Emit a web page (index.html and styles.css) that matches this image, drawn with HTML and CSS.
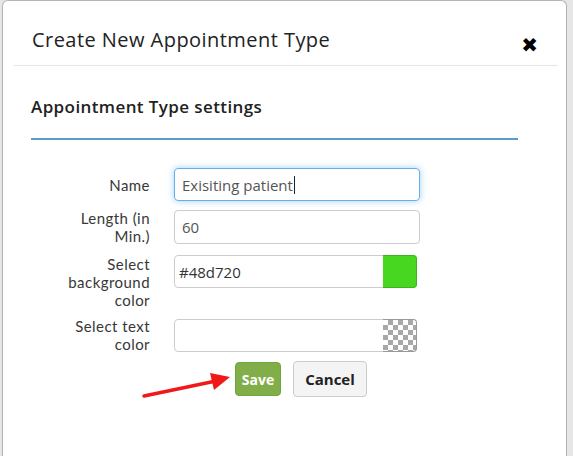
FILE: index.html
```html
<!DOCTYPE html>
<html lang="en">
<head>
<meta charset="utf-8">
<title>Create New Appointment Type</title>
<link rel="stylesheet" href="styles.css">
</head>
<body>
<div class="modal">
  <div class="modal-header">
    <h1 class="modal-title">Create New Appointment Type</h1>
    <span class="close">&#10006;</span>
  </div>
  <div class="modal-body">
    <h2 class="section-title">Appointment Type settings</h2>
    <div class="form">
      <label class="label">Name</label>
      <div class="field focused">Exisiting patient<span class="caret"></span></div>

      <label class="label">Length (in<br>Min.)</label>
      <div class="field tall">60</div>

      <label class="label shifted">Select<br>background<br>color</label>
      <div class="field color top"><span class="color-text">#48d720</span><span class="swatch green"></span></div>

      <label class="label">Select text<br>color</label>
      <div class="field color"><span class="color-text"></span><span class="swatch checker"></span></div>
    </div>
    <div class="actions">
      <button class="btn save">Save</button>
      <button class="btn cancel">Cancel</button>
    </div>
  </div>
  <svg class="arrow" width="100" height="30" viewBox="0 0 100 30">
    <line x1="3" y1="25" x2="75" y2="10" stroke="#f01818" stroke-width="3.5" stroke-linecap="round"/>
    <polygon points="89,6 69,2 73,19" fill="#f01818"/>
  </svg>
</div>
</body>
</html>
```
FILE: styles.css
```css
html, body {
  margin: 0;
  padding: 0;
  height: 100%;
  overflow: hidden;
}
body {
  background-color: #e6e6e6;
  font-family: "Open Sans", "Noto Sans", sans-serif;
  color: #333;
}
.modal {
  position: relative;
  margin-left: 2px;
  width: 563px;
  height: 470px;
  background: #fff;
  border: 1px solid #b4b4b4;
  border-bottom: none;
  border-radius: 6px 6px 0 0;
}
.modal-header {
  margin: 0 8px 0 11px;
  height: 64px;
  border-bottom: 1px solid #e5e5e5;
  display: flex;
  align-items: flex-start;
  justify-content: space-between;
  padding: 0 20px 0 18px;
}
.modal-title {
  margin: 0;
  padding-top: 26px;
  font-size: 20px;
  letter-spacing: 0.45px;
  font-weight: 400;
  line-height: 26px;
  color: #222;
}
.close {
  font-size: 20px;
  line-height: 20px;
  color: #000;
  font-weight: 700;
  margin-top: 34px;
  font-family: "DejaVu Sans", sans-serif;
}
.modal-body {
  padding: 29px 48px 0 28px;
}
.section-title {
  margin: 0;
  font-size: 17px;
  letter-spacing: 0.4px;
  font-weight: 600;
  line-height: 24px;
  padding-bottom: 19px;
  border-bottom: 2px solid #5a9dcb;
  color: #222;
}
.form {
  display: grid;
  grid-template-columns: 119px 246px;
  column-gap: 24px;
  row-gap: 8px;
  margin-top: 28px;
  align-items: center;
}
.label {
  text-align: right;
  font-family: Lato, "Open Sans", sans-serif;
  font-size: 15px;
  letter-spacing: 0.45px;
  line-height: 18px;
  color: #383838;
}
.label.shifted {
  margin-top: 2px;
}
.field {
  box-sizing: border-box;
  height: 33px;
  border: 1px solid #ccc;
  border-radius: 4px;
  padding: 0 7px;
  display: flex;
  align-items: center;
  font-size: 15px;
  color: #555;
}
.field.tall {
  height: 34px;
}
.field.focused {
  border-color: #66afe9;
  box-shadow: 0 0 7px rgba(102, 175, 233, 0.6);
}
.caret {
  display: inline-block;
  width: 1px;
  height: 18px;
  background: #222;
  margin-left: 1px;
}
.field.color {
  width: 243px;
  padding: 0 0 0 4px;
  justify-content: space-between;
  color: #333;
}
.field.top {
  align-self: start;
  margin-top: 2px;
}
.swatch {
  align-self: stretch;
  width: 34px;
  margin: -1px -1px -1px 0;
  border-radius: 0 4px 4px 0;
  box-sizing: border-box;
}
.swatch.green {
  background: #48d720;
  border: 1px solid #3fb31e;
  border-left: none;
}
.swatch.checker {
  background-color: #fff;
  background-image:
    linear-gradient(45deg, #a8a8a8 25%, transparent 25%, transparent 75%, #a8a8a8 75%),
    linear-gradient(45deg, #a8a8a8 25%, transparent 25%, transparent 75%, #a8a8a8 75%);
  background-size: 10px 10px;
  background-position: 0 0, 5px 5px;
  border: 1px solid #999;
  border-left: none;
}
.actions {
  display: flex;
  gap: 12px;
  margin: 8px 0 0 204px;
  align-items: center;
}
.btn {
  font-family: "Open Sans", "Noto Sans", sans-serif;
  font-size: 15px;
  font-weight: 700;
  border-radius: 4px;
  padding: 0;
  cursor: pointer;
}
.save {
  width: 46px;
  height: 34px;
  background: #82ae4a;
  border: 1px solid #6da83b;
  color: #fff;
  font-size: 14px;
}
.cancel {
  width: 74px;
  height: 36px;
  background: #f4f4f4;
  border: 1px solid #ccc;
  color: #222;
}
.arrow {
  position: absolute;
  left: 138px;
  top: 370px;
}
```
